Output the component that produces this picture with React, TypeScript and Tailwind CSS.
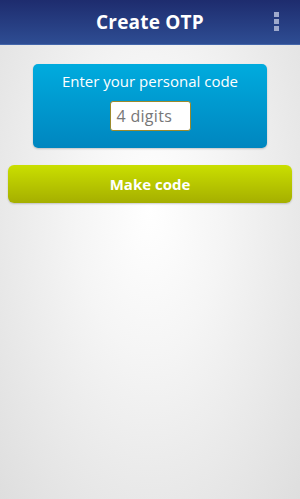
export default function App() {
  return (
    <div
      className="w-[300px] h-[499px] flex flex-col overflow-hidden bg-[radial-gradient(ellipse_at_50%_42%,#ffffff_0%,#f5f5f5_35%,#dedede_100%)]"
      style={{ fontFamily: '"Open Sans", "Noto Sans", sans-serif' }}
    >
      {/* header */}
      <div className="relative h-[45px] shrink-0 flex items-center justify-center bg-gradient-to-b from-[#1e2c6e] to-[#2e4d93] border-b border-[#4466aa]">
        <h1 className="text-[19px] font-bold text-white tracking-[0.2px]">Create OTP</h1>
        <div className="absolute right-[21px] top-[12px] flex flex-col gap-[2px]">
          <span className="block w-[5px] h-[5px] bg-[#9ea9cc]" />
          <span className="block w-[5px] h-[5px] bg-[#9ea9cc]" />
          <span className="block w-[5px] h-[5px] bg-[#9ea9cc]" />
        </div>
      </div>

      {/* code card */}
      <div className="mx-[33px] mt-[19px] h-[84px] rounded-[5px] bg-gradient-to-b from-[#00abde] to-[#0086bf] shadow-[0_1px_2px_rgba(0,0,0,0.2)] flex flex-col items-center pt-[6px]">
        <p className="text-[15px] text-white leading-[22px]">Enter your personal code</p>
        <div className="mt-[9px] w-[81px] h-[30px] rounded-[3px] bg-white border-[1.5px] border-[#9b8a2c] flex items-center pl-[6px]">
          <span className="text-[16px] text-[#777777] tracking-[0.3px]">4 digits</span>
        </div>
      </div>

      {/* make code button */}
      <button className="mx-[8px] mt-[17px] h-[38px] rounded-[6px] bg-gradient-to-b from-[#cadf00] to-[#a5af00] shadow-[0_1px_2px_rgba(0,0,0,0.2)] flex items-center justify-center">
        <span className="text-[15px] font-bold text-white">Make code</span>
      </button>
    </div>
  )
}
